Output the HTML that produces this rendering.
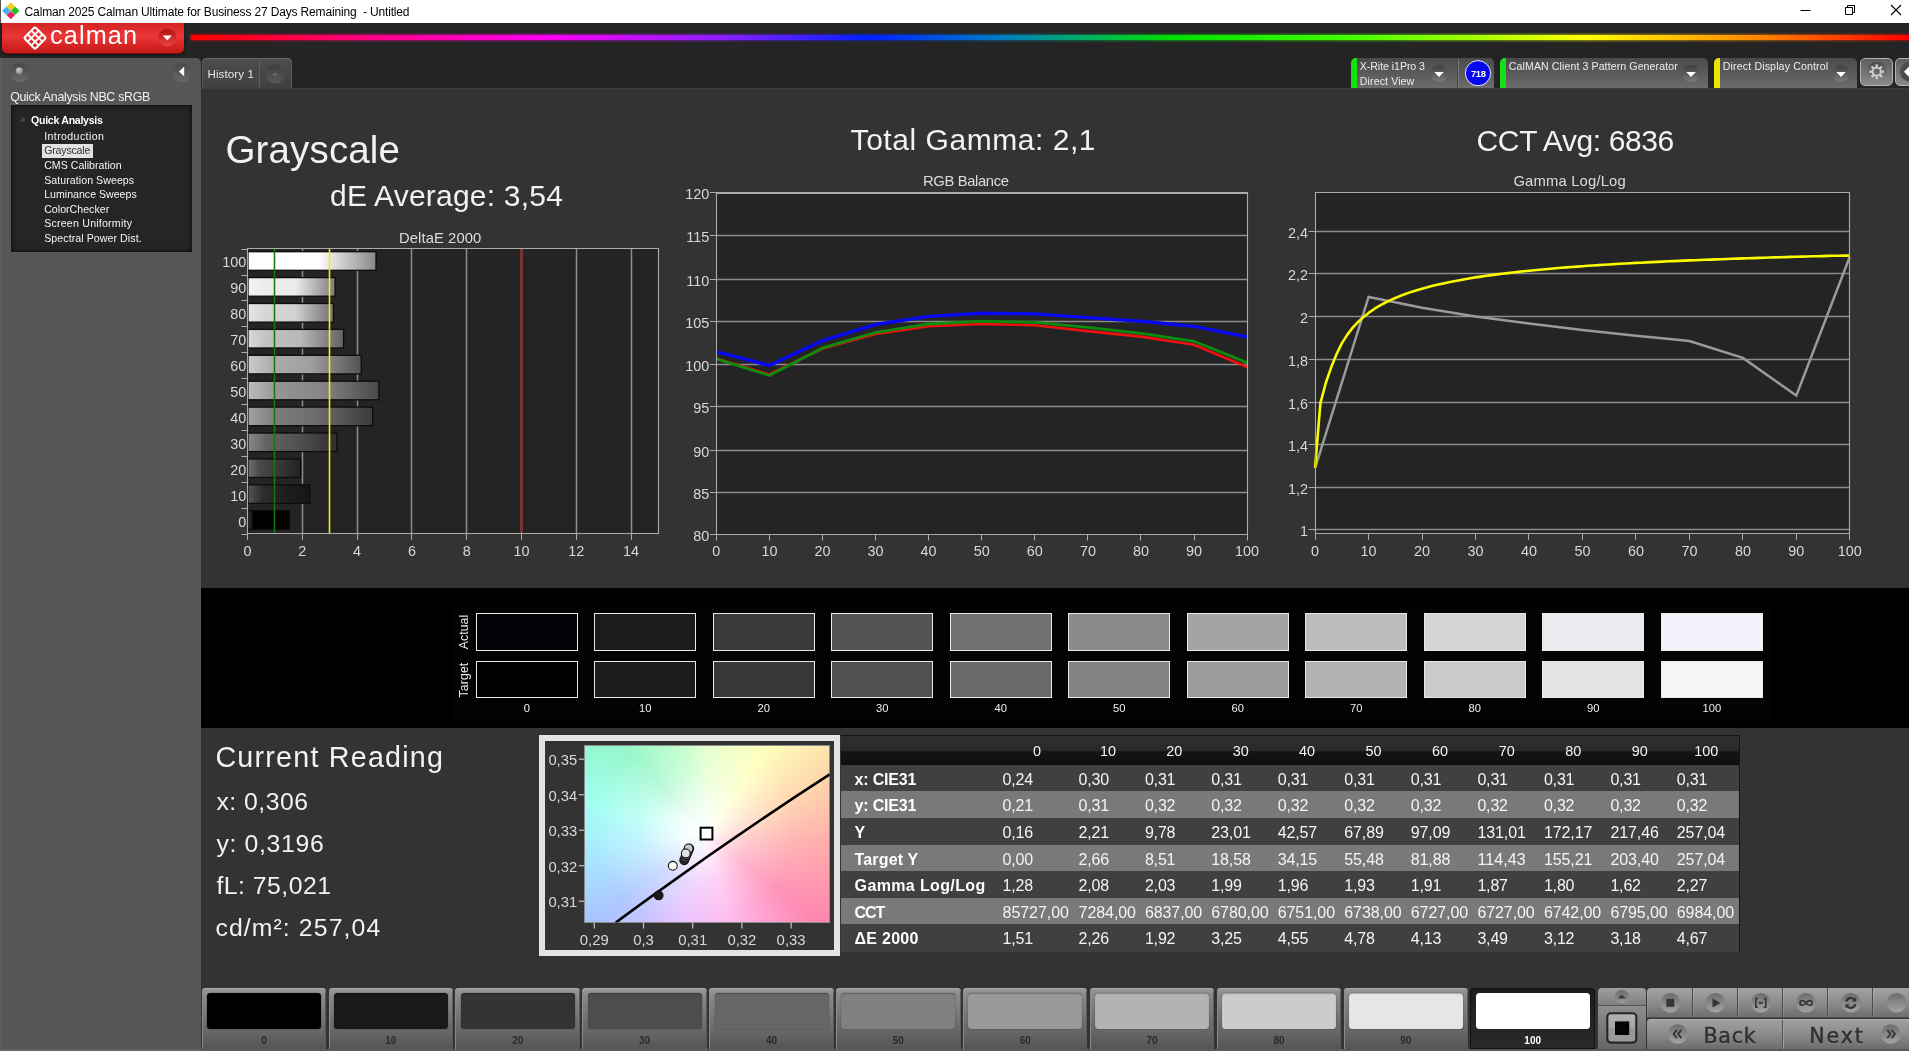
<!DOCTYPE html>
<html><head><meta charset="utf-8"><title>Calman</title>
<style>
html,body{margin:0;padding:0;background:#333;}
body{width:1909px;height:1051px;overflow:hidden;position:relative;font-family:"Liberation Sans",sans-serif;}
#app{position:absolute;left:0;top:0;width:1909px;height:1051px;will-change:transform;}
.t{position:absolute;white-space:nowrap;line-height:1;}
svg{position:absolute;overflow:visible;}
svg text{font-family:"Liberation Sans",sans-serif;}
</style></head><body>
<div id="app">
<div style="position:absolute;left:0px;top:0px;width:1909px;height:23px;background:#fff;"></div>
<svg style="left:0px;top:0px" width="22" height="22" viewBox="0 0 22 22"><path d="M10.8 2.3 L15 6.5 L10.8 10.7 L6.6 6.5Z" fill="#f4cf1e"/><path d="M6.4 6.5 L10.6 10.7 L6.4 14.9 L2.2 10.7Z" fill="#3fb2f2"/><path d="M15.2 6.5 L19.4 10.7 L15.2 14.9 L11 10.7Z" fill="#22c122"/><path d="M10.8 10.9 L15 15.1 L10.8 19.3 L6.6 15.1Z" fill="#e8215e"/></svg>
<div style="position:absolute;left:0px;top:0px;width:1px;height:23px;background:#555;"></div>
<div class="t" style="left:24.60px;top:5.84px;font-size:12px;color:#000;letter-spacing:-0.153px;">Calman 2025 Calman Ultimate for Business 27 Days Remaining&nbsp; - Untitled</div>
<svg style="left:1790px;top:0" width="119" height="23" viewBox="0 0 119 23" fill="none" stroke="#000" stroke-width="1"><path d="M10.5 10.5 H20.5"/><path d="M55.5 7.5 H62.5 V14.5 H55.5Z M57.5 7.5 V5.5 H64.5 V12.5 H62.5"/><path d="M101 5 L111 15 M111 5 L101 15" stroke-width="1.1"/></svg>
<div style="position:absolute;left:0px;top:23px;width:1909px;height:65px;background:#242424;"></div>
<div style="position:absolute;left:2px;top:23px;width:182px;height:29.5px;background:linear-gradient(#d42424 0%,#e93636 45%,#d92626 70%,#c21a1a 100%);border-radius:0 0 5px 5px;box-shadow:0 1px 0 #7a0f0f, 0 2px 3px rgba(0,0,0,.6);"></div>
<svg style="left:23px;top:25.5px" width="24" height="24" viewBox="0 0 24 24"><g transform="rotate(45 12 12)" fill="none" stroke="#fff" stroke-width="2.1"><rect x="4.2" y="4.2" width="15.6" height="15.6" rx="1.5"/><path d="M9.4 4.2 V19.8 M14.6 4.2 V19.8 M4.2 9.4 H19.8 M4.2 14.6 H19.8" stroke-width="1.9"/></g></svg>
<div class="t" style="left:50.00px;top:22.97px;font-size:25.2px;color:#fff;letter-spacing:1.163px;">calman</div>
<svg style="left:157px;top:27px" width="21" height="21" viewBox="0 0 21 21"><defs><linearGradient id="rdg" x1="0" y1="0" x2="0" y2="1"><stop offset="0" stop-color="#b01212"/><stop offset="1" stop-color="#e44"/></linearGradient></defs><circle cx="10.3" cy="10.4" r="9" fill="url(#rdg)"/><path d="M5.8 8.6 H14.8 L10.3 13.4Z" fill="#fff"/></svg>
<div style="position:absolute;left:190px;top:33.8px;width:1722px;height:7.6px;background:linear-gradient(90deg,#ff0000 0%,#ff0018 2.5%,#ff0080 9.9%,#ff00f0 20.4%,#8a20ff 31%,#0020ff 39.4%,#0078c8 46.8%,#00b060 52.1%,#00e000 57.3%,#48ff00 67.9%,#ffff00 81.1%,#ff8000 91.6%,#ff0000 100%);filter:blur(1.3px);opacity:.55;"></div>
<div style="position:absolute;left:191px;top:35.3px;width:1718px;height:4.8px;background:linear-gradient(90deg,#ff0000 0%,#ff0018 2.5%,#ff0080 9.9%,#ff00f0 20.4%,#8a20ff 31%,#0020ff 39.4%,#0078c8 46.8%,#00b060 52.1%,#00e000 57.3%,#48ff00 67.9%,#ffff00 81.1%,#ff8000 91.6%,#ff0000 100%);border-radius:2px 0 0 2px;"></div>
<div style="position:absolute;left:202px;top:58px;width:90px;height:30px;background:linear-gradient(#4d4d4d 0%,#404040 100%);border-radius:5px 5px 0 0;box-shadow:inset 0 1px 0 #6a6a6a, inset 1px 0 0 #5c5c5c, inset -1px 0 0 #5c5c5c;"></div>
<div style="position:absolute;left:259px;top:59px;width:1px;height:29px;background:#5e5e5e;"></div>
<div class="t" style="left:207.50px;top:68.38px;font-size:11.6px;color:#e6e6e6;letter-spacing:0.084px;">History 1</div>
<svg style="left:264px;top:62px" width="24" height="24" viewBox="0 0 24 24"><defs><linearGradient id="pg" x1="0" y1="0" x2="0" y2="1"><stop offset="0" stop-color="#3e3e3e"/><stop offset="1" stop-color="#585858"/></linearGradient></defs><circle cx="11" cy="12" r="9.5" fill="url(#pg)"/><path d="M11 9.6 V15.4 M8.1 12.5 H13.9" stroke="#6c6c6c" stroke-width="1.1"/></svg>
<div style="position:absolute;left:1350.5px;top:58px;width:143px;height:30px;background:linear-gradient(#4b4b4b 0%,#5a5a5a 50%,#6c6c6c 100%);border-radius:5px 5px 0 0;overflow:hidden;"><div style="position:absolute;left:0;top:0;width:6.5px;height:30px;background:#14e014;"></div></div>
<div style="position:absolute;left:1457.5px;top:59px;width:1px;height:29px;background:#777;"></div>
<div style="position:absolute;left:1456.5px;top:59px;width:1px;height:29px;background:#484848;"></div>
<svg style="left:1428.6px;top:63px" width="20" height="20" viewBox="0 0 20 20"><defs><linearGradient id="dg1350.5" x1="0" y1="0" x2="0" y2="1"><stop offset="0" stop-color="#3d3d3d"/><stop offset="1" stop-color="#7a7a7a"/></linearGradient></defs><circle cx="10" cy="10.3" r="8.6" fill="url(#dg1350.5)"/><path d="M5.2 8.9 H14.8 L10 14.100000000000001Z" fill="#fff"/></svg>
<div class="t" style="left:1359.80px;top:61.23px;font-size:10.6px;color:#ececec;letter-spacing:-0.058px;">X-Rite i1Pro 3</div>
<div class="t" style="left:1359.80px;top:75.83px;font-size:10.6px;color:#ececec;letter-spacing:0.107px;">Direct View</div>
<svg style="left:1464px;top:59px" width="28" height="28" viewBox="0 0 28 28"><circle cx="14" cy="14.2" r="12.6" fill="#0606ee" stroke="#e8e8ff" stroke-width="1"/></svg>
<div class="t" style="left:1471.00px;top:68.94px;font-size:9.4px;color:#fff;font-weight:bold;letter-spacing:-0.347px;">718</div>
<div style="position:absolute;left:1499.5px;top:58px;width:208px;height:30px;background:linear-gradient(#4b4b4b 0%,#5a5a5a 50%,#6c6c6c 100%);border-radius:5px 5px 0 0;overflow:hidden;"><div style="position:absolute;left:0;top:0;width:6.5px;height:30px;background:#14e014;"></div></div>
<svg style="left:1681.3px;top:63px" width="20" height="20" viewBox="0 0 20 20"><defs><linearGradient id="dg1499.5" x1="0" y1="0" x2="0" y2="1"><stop offset="0" stop-color="#3d3d3d"/><stop offset="1" stop-color="#7a7a7a"/></linearGradient></defs><circle cx="10" cy="10.3" r="8.6" fill="url(#dg1499.5)"/><path d="M5.2 8.9 H14.8 L10 14.100000000000001Z" fill="#fff"/></svg>
<div class="t" style="left:1508.80px;top:61.23px;font-size:10.6px;color:#ececec;letter-spacing:0.090px;">CalMAN Client 3 Pattern Generator</div>
<div style="position:absolute;left:1713.5px;top:58px;width:143.5px;height:30px;background:linear-gradient(#4b4b4b 0%,#5a5a5a 50%,#6c6c6c 100%);border-radius:5px 5px 0 0;overflow:hidden;"><div style="position:absolute;left:0;top:0;width:6.5px;height:30px;background:#e6e600;"></div></div>
<svg style="left:1830.9px;top:63px" width="20" height="20" viewBox="0 0 20 20"><defs><linearGradient id="dg1713.5" x1="0" y1="0" x2="0" y2="1"><stop offset="0" stop-color="#3d3d3d"/><stop offset="1" stop-color="#7a7a7a"/></linearGradient></defs><circle cx="10" cy="10.3" r="8.6" fill="url(#dg1713.5)"/><path d="M5.2 8.9 H14.8 L10 14.100000000000001Z" fill="#fff"/></svg>
<div class="t" style="left:1722.80px;top:61.23px;font-size:10.6px;color:#ececec;letter-spacing:0.139px;">Direct Display Control</div>
<div style="position:absolute;left:1860px;top:58px;width:33px;height:28px;box-sizing:border-box;border:1px solid #b4b4b4;border-radius:5px;background:linear-gradient(#5e5e5e,#8a8a8a);"></div>
<svg style="left:1866px;top:61px" width="22" height="22" viewBox="0 0 22 22"><defs><linearGradient id="gg" x1="0" y1="0" x2="0" y2="1"><stop offset="0" stop-color="#4a4a4a"/><stop offset="1" stop-color="#8a8a8a"/></linearGradient></defs><circle cx="10.7" cy="10.8" r="10" fill="url(#gg)"/><g transform="translate(10.7 10.7)" stroke="#d2d2d2" fill="none"><circle r="4.1" stroke-width="1.9"/><path d="M0 -4.8 V-7.3" stroke-width="2.3" transform="rotate(0)"/><path d="M0 -4.8 V-7.3" stroke-width="2.3" transform="rotate(45)"/><path d="M0 -4.8 V-7.3" stroke-width="2.3" transform="rotate(90)"/><path d="M0 -4.8 V-7.3" stroke-width="2.3" transform="rotate(135)"/><path d="M0 -4.8 V-7.3" stroke-width="2.3" transform="rotate(180)"/><path d="M0 -4.8 V-7.3" stroke-width="2.3" transform="rotate(225)"/><path d="M0 -4.8 V-7.3" stroke-width="2.3" transform="rotate(270)"/><path d="M0 -4.8 V-7.3" stroke-width="2.3" transform="rotate(315)"/></g></svg>
<div style="position:absolute;left:1895px;top:58px;width:20px;height:28px;box-sizing:border-box;border:1px solid #b4b4b4;border-radius:5px;background:linear-gradient(#5e5e5e,#8a8a8a);"></div>
<svg style="left:1897px;top:61px" width="12" height="22" viewBox="0 0 12 22"><circle cx="13" cy="10.8" r="10" fill="#4c4c4c"/><path d="M12 5.5 V16 L7 10.8Z" fill="#fff"/></svg>
<div style="position:absolute;left:0px;top:58px;width:201px;height:993px;background:#565656;border-radius:0 5px 0 0;"></div>
<div style="position:absolute;left:0px;top:58px;width:1.5px;height:993px;background:#5c5c58;"></div>
<svg style="left:8px;top:61px" width="24" height="24" viewBox="0 0 24 24"><defs><linearGradient id="lb1" x1="0" y1="0" x2="0" y2="1"><stop offset="0" stop-color="#484848"/><stop offset="1" stop-color="#686868"/></linearGradient><radialGradient id="lb2" cx=".4" cy=".35" r=".7"><stop offset="0" stop-color="#cfcfcf"/><stop offset="1" stop-color="#7a7a7a"/></radialGradient></defs><circle cx="11.6" cy="11.6" r="9.6" fill="url(#lb1)"/><circle cx="11.4" cy="9.8" r="3.6" fill="url(#lb2)"/></svg>
<svg style="left:170px;top:61px" width="24" height="24" viewBox="0 0 24 24"><circle cx="11.6" cy="11.6" r="9.6" fill="url(#lb1)"/><path d="M14.2 5.6 V15.4 L9 10.5Z" fill="#fff"/></svg>
<div class="t" style="left:10.20px;top:90.50px;font-size:12.4px;color:#f0f0f0;letter-spacing:-0.298px;">Quick Analysis NBC sRGB</div>
<div style="position:absolute;left:10.5px;top:105px;width:181.5px;height:146.5px;background:#252525;box-shadow:inset 0 0 4px 1px #111;"></div>
<svg style="left:18px;top:115px" width="8" height="8" viewBox="0 0 8 8"><path d="M1.5 6.5 H6.5 V1.5Z" fill="#4a4a4a"/></svg>
<div class="t" style="left:31.00px;top:114.63px;font-size:10.6px;color:#fff;font-weight:bold;letter-spacing:-0.283px;">Quick Analysis</div>
<div style="position:absolute;left:42px;top:143.5px;width:50.5px;height:14px;background:#e2e2e2;"></div>
<div class="t" style="left:44.20px;top:130.73px;font-size:10.6px;color:#f4f4f4;letter-spacing:0.387px;">Introduction</div>
<div class="t" style="left:44.20px;top:145.35px;font-size:10.6px;color:#333;letter-spacing:-0.187px;">Grayscale</div>
<div class="t" style="left:44.20px;top:159.97px;font-size:10.6px;color:#f4f4f4;letter-spacing:0.025px;">CMS Calibration</div>
<div class="t" style="left:44.20px;top:174.59px;font-size:10.6px;color:#f4f4f4;letter-spacing:0.063px;">Saturation Sweeps</div>
<div class="t" style="left:44.20px;top:189.21px;font-size:10.6px;color:#f4f4f4;letter-spacing:0.003px;">Luminance Sweeps</div>
<div class="t" style="left:44.20px;top:203.83px;font-size:10.6px;color:#f4f4f4;letter-spacing:0.020px;">ColorChecker</div>
<div class="t" style="left:44.20px;top:218.45px;font-size:10.6px;color:#f4f4f4;letter-spacing:0.224px;">Screen Uniformity</div>
<div class="t" style="left:44.20px;top:233.07px;font-size:10.6px;color:#f4f4f4;letter-spacing:0.077px;">Spectral Power Dist.</div>
<div style="position:absolute;left:201px;top:88px;width:1708px;height:500px;background:#333;"></div>
<div style="position:absolute;left:201px;top:88px;width:1708px;height:1px;background:#3c3c3c;"></div>
<div class="t" style="left:225.40px;top:130.81px;font-size:38.5px;color:#f2f2f2;letter-spacing:0.163px;">Grayscale</div>
<div class="t" style="left:330.00px;top:180.80px;font-size:30px;color:#f2f2f2;letter-spacing:0.213px;">dE Average: 3,54</div>
<div class="t" style="left:850.60px;top:125.11px;font-size:30px;color:#f2f2f2;letter-spacing:0.541px;">Total Gamma: 2,1</div>
<div class="t" style="left:1476.60px;top:125.61px;font-size:30px;color:#f2f2f2;letter-spacing:-0.389px;">CCT Avg: 6836</div>
<div class="t" style="left:399.00px;top:231.37px;font-size:14.8px;color:#dcdcdc;letter-spacing:0.079px;">DeltaE 2000</div>
<div class="t" style="left:923.00px;top:174.07px;font-size:14.8px;color:#dcdcdc;letter-spacing:-0.372px;">RGB Balance</div>
<div class="t" style="left:1513.40px;top:174.37px;font-size:14.8px;color:#dcdcdc;letter-spacing:0.176px;">Gamma Log/Log</div>
<svg style="left:0;top:0" width="1909" height="600" viewBox="0 0 1909 600">
<rect x="247.5" y="248.4" width="411.0" height="285.5" fill="#242424"/>
<path d="M302.5 248.4 V533.9" stroke="#8c8c8c" stroke-width="1.5"/>
<path d="M357.5 248.4 V533.9" stroke="#8c8c8c" stroke-width="1.5"/>
<path d="M411.5 248.4 V533.9" stroke="#8c8c8c" stroke-width="1.5"/>
<path d="M466.5 248.4 V533.9" stroke="#8c8c8c" stroke-width="1.5"/>
<path d="M521.5 248.4 V533.9" stroke="#8c8c8c" stroke-width="1.5"/>
<path d="M576.5 248.4 V533.9" stroke="#8c8c8c" stroke-width="1.5"/>
<path d="M631.5 248.4 V533.9" stroke="#8c8c8c" stroke-width="1.5"/>
<defs>
<linearGradient id="bg100" x1="0" y1="0" x2="1" y2="0"><stop offset="0" stop-color="#ffffff"/><stop offset="0.22" stop-color="#ffffff"/><stop offset="0.55" stop-color="#ffffff"/><stop offset="1" stop-color="#888888"/></linearGradient>
<linearGradient id="bg90" x1="0" y1="0" x2="1" y2="0"><stop offset="0" stop-color="#f2f2f2"/><stop offset="0.22" stop-color="#eaeaea"/><stop offset="0.55" stop-color="#ebebeb"/><stop offset="1" stop-color="#7b7b7b"/></linearGradient>
<linearGradient id="bg80" x1="0" y1="0" x2="1" y2="0"><stop offset="0" stop-color="#e6e6e6"/><stop offset="0.22" stop-color="#d5d5d5"/><stop offset="0.55" stop-color="#d2d2d2"/><stop offset="1" stop-color="#6e6e6e"/></linearGradient>
<linearGradient id="bg70" x1="0" y1="0" x2="1" y2="0"><stop offset="0" stop-color="#d9d9d9"/><stop offset="0.22" stop-color="#c0c0c0"/><stop offset="0.55" stop-color="#b8b8b8"/><stop offset="1" stop-color="#616161"/></linearGradient>
<linearGradient id="bg60" x1="0" y1="0" x2="1" y2="0"><stop offset="0" stop-color="#cccccc"/><stop offset="0.22" stop-color="#ababab"/><stop offset="0.55" stop-color="#9f9f9f"/><stop offset="1" stop-color="#545454"/></linearGradient>
<linearGradient id="bg50" x1="0" y1="0" x2="1" y2="0"><stop offset="0" stop-color="#bcbcbc"/><stop offset="0.22" stop-color="#959595"/><stop offset="0.55" stop-color="#868686"/><stop offset="1" stop-color="#484848"/></linearGradient>
<linearGradient id="bg40" x1="0" y1="0" x2="1" y2="0"><stop offset="0" stop-color="#a2a2a2"/><stop offset="0.22" stop-color="#7c7c7c"/><stop offset="0.55" stop-color="#6c6c6c"/><stop offset="1" stop-color="#3b3b3b"/></linearGradient>
<linearGradient id="bg30" x1="0" y1="0" x2="1" y2="0"><stop offset="0" stop-color="#888888"/><stop offset="0.22" stop-color="#626262"/><stop offset="0.55" stop-color="#525252"/><stop offset="1" stop-color="#2e2e2e"/></linearGradient>
<linearGradient id="bg20" x1="0" y1="0" x2="1" y2="0"><stop offset="0" stop-color="#6f6f6f"/><stop offset="0.22" stop-color="#494949"/><stop offset="0.55" stop-color="#393939"/><stop offset="1" stop-color="#222222"/></linearGradient>
<linearGradient id="bg10" x1="0" y1="0" x2="1" y2="0"><stop offset="0" stop-color="#565656"/><stop offset="0.22" stop-color="#2f2f2f"/><stop offset="0.55" stop-color="#202020"/><stop offset="1" stop-color="#151515"/></linearGradient>
<linearGradient id="bg0" x1="0" y1="0" x2="1" y2="0"><stop offset="0" stop-color="#3c3c3c"/><stop offset="0.14" stop-color="#000000"/><stop offset="0.55" stop-color="#000000"/><stop offset="1" stop-color="#000000"/></linearGradient>
</defs>
<rect x="248.0" y="251.7" width="128.0" height="18.6" fill="url(#bg100)" stroke="#0c0c0c" stroke-width="1.3"/>
<rect x="248.0" y="277.6" width="87.1" height="18.6" fill="url(#bg90)" stroke="#0c0c0c" stroke-width="1.3"/>
<rect x="248.0" y="303.5" width="85.5" height="18.6" fill="url(#bg80)" stroke="#0c0c0c" stroke-width="1.3"/>
<rect x="248.0" y="329.4" width="95.6" height="18.6" fill="url(#bg70)" stroke="#0c0c0c" stroke-width="1.3"/>
<rect x="248.0" y="355.3" width="113.2" height="18.6" fill="url(#bg60)" stroke="#0c0c0c" stroke-width="1.3"/>
<rect x="248.0" y="381.2" width="131.0" height="18.6" fill="url(#bg50)" stroke="#0c0c0c" stroke-width="1.3"/>
<rect x="248.0" y="407.1" width="124.7" height="18.6" fill="url(#bg40)" stroke="#0c0c0c" stroke-width="1.3"/>
<rect x="248.0" y="433.0" width="89.0" height="18.6" fill="url(#bg30)" stroke="#0c0c0c" stroke-width="1.3"/>
<rect x="248.0" y="458.9" width="52.6" height="18.6" fill="url(#bg20)" stroke="#0c0c0c" stroke-width="1.3"/>
<rect x="248.0" y="484.8" width="61.9" height="18.6" fill="url(#bg10)" stroke="#0c0c0c" stroke-width="1.3"/>
<rect x="248.0" y="510.7" width="41.4" height="18.6" fill="url(#bg0)" stroke="#0c0c0c" stroke-width="1.3"/>
<path d="M274.5 248.4 V533.9" stroke="#0c7c0c" stroke-width="1.5"/>
<path d="M329.5 248.4 V533.9" stroke="#f0f000" stroke-width="1.6"/>
<path d="M521.5 248.4 V533.9" stroke="#c41c1c" stroke-width="1.8"/>
<path d="M247.5 533.5 V248.5 H658.5 V533.5 Z" fill="none" stroke="#ababab" stroke-width="1.1"/>
<path d="M241.5 249.5 H247.5" stroke="#ababab" stroke-width="1"/>
<path d="M241.5 275.5 H247.5" stroke="#ababab" stroke-width="1"/>
<path d="M241.5 300.5 H247.5" stroke="#ababab" stroke-width="1"/>
<path d="M241.5 326.5 H247.5" stroke="#ababab" stroke-width="1"/>
<path d="M241.5 352.5 H247.5" stroke="#ababab" stroke-width="1"/>
<path d="M241.5 378.5 H247.5" stroke="#ababab" stroke-width="1"/>
<path d="M241.5 404.5 H247.5" stroke="#ababab" stroke-width="1"/>
<path d="M241.5 430.5 H247.5" stroke="#ababab" stroke-width="1"/>
<path d="M241.5 456.5 H247.5" stroke="#ababab" stroke-width="1"/>
<path d="M241.5 482.5 H247.5" stroke="#ababab" stroke-width="1"/>
<path d="M241.5 508.5 H247.5" stroke="#ababab" stroke-width="1"/>
<path d="M241.5 534.5 H247.5" stroke="#ababab" stroke-width="1"/>
<text x="246.3" y="267.0" text-anchor="end" font-size="14.4" fill="#d8d8d8">100</text>
<text x="246.3" y="292.9" text-anchor="end" font-size="14.4" fill="#d8d8d8">90</text>
<text x="246.3" y="318.9" text-anchor="end" font-size="14.4" fill="#d8d8d8">80</text>
<text x="246.3" y="344.8" text-anchor="end" font-size="14.4" fill="#d8d8d8">70</text>
<text x="246.3" y="370.8" text-anchor="end" font-size="14.4" fill="#d8d8d8">60</text>
<text x="246.3" y="396.8" text-anchor="end" font-size="14.4" fill="#d8d8d8">50</text>
<text x="246.3" y="422.7" text-anchor="end" font-size="14.4" fill="#d8d8d8">40</text>
<text x="246.3" y="448.7" text-anchor="end" font-size="14.4" fill="#d8d8d8">30</text>
<text x="246.3" y="474.6" text-anchor="end" font-size="14.4" fill="#d8d8d8">20</text>
<text x="246.3" y="500.6" text-anchor="end" font-size="14.4" fill="#d8d8d8">10</text>
<text x="246.3" y="526.5" text-anchor="end" font-size="14.4" fill="#d8d8d8">0</text>
<path d="M247.5 533.9 v6" stroke="#ababab" stroke-width="1"/>
<text x="247.5" y="555.8" text-anchor="middle" font-size="14.4" fill="#d8d8d8">0</text>
<path d="M302.5 533.9 v6" stroke="#ababab" stroke-width="1"/>
<text x="302.3" y="555.8" text-anchor="middle" font-size="14.4" fill="#d8d8d8">2</text>
<path d="M357.5 533.9 v6" stroke="#ababab" stroke-width="1"/>
<text x="357.1" y="555.8" text-anchor="middle" font-size="14.4" fill="#d8d8d8">4</text>
<path d="M411.5 533.9 v6" stroke="#ababab" stroke-width="1"/>
<text x="411.9" y="555.8" text-anchor="middle" font-size="14.4" fill="#d8d8d8">6</text>
<path d="M466.5 533.9 v6" stroke="#ababab" stroke-width="1"/>
<text x="466.7" y="555.8" text-anchor="middle" font-size="14.4" fill="#d8d8d8">8</text>
<path d="M521.5 533.9 v6" stroke="#ababab" stroke-width="1"/>
<text x="521.5" y="555.8" text-anchor="middle" font-size="14.4" fill="#d8d8d8">10</text>
<path d="M576.5 533.9 v6" stroke="#ababab" stroke-width="1"/>
<text x="576.3" y="555.8" text-anchor="middle" font-size="14.4" fill="#d8d8d8">12</text>
<path d="M631.5 533.9 v6" stroke="#ababab" stroke-width="1"/>
<text x="631.1" y="555.8" text-anchor="middle" font-size="14.4" fill="#d8d8d8">14</text>
<rect x="716.3" y="192.5" width="530.8" height="342.0" fill="#242424"/>
<path d="M709.8 192.5 H716.3" stroke="#ababab" stroke-width="1"/>
<text x="709.3" y="199.3" text-anchor="end" font-size="14.4" fill="#d8d8d8">120</text>
<path d="M716.3 235.5 H1247.1" stroke="#8c8c8c" stroke-width="1.5"/>
<path d="M709.8 235.5 H716.3" stroke="#ababab" stroke-width="1"/>
<text x="709.3" y="241.9" text-anchor="end" font-size="14.4" fill="#d8d8d8">115</text>
<path d="M716.3 279.5 H1247.1" stroke="#8c8c8c" stroke-width="1.5"/>
<path d="M709.8 279.5 H716.3" stroke="#ababab" stroke-width="1"/>
<text x="709.3" y="285.9" text-anchor="end" font-size="14.4" fill="#d8d8d8">110</text>
<path d="M716.3 321.5 H1247.1" stroke="#8c8c8c" stroke-width="1.5"/>
<path d="M709.8 321.5 H716.3" stroke="#ababab" stroke-width="1"/>
<text x="709.3" y="327.9" text-anchor="end" font-size="14.4" fill="#d8d8d8">105</text>
<path d="M716.3 364.5 H1247.1" stroke="#8c8c8c" stroke-width="1.5"/>
<path d="M709.8 364.5 H716.3" stroke="#ababab" stroke-width="1"/>
<text x="709.3" y="370.9" text-anchor="end" font-size="14.4" fill="#d8d8d8">100</text>
<path d="M716.3 406.5 H1247.1" stroke="#8c8c8c" stroke-width="1.5"/>
<path d="M709.8 406.5 H716.3" stroke="#ababab" stroke-width="1"/>
<text x="709.3" y="412.9" text-anchor="end" font-size="14.4" fill="#d8d8d8">95</text>
<path d="M716.3 450.5 H1247.1" stroke="#8c8c8c" stroke-width="1.5"/>
<path d="M709.8 450.5 H716.3" stroke="#ababab" stroke-width="1"/>
<text x="709.3" y="456.9" text-anchor="end" font-size="14.4" fill="#d8d8d8">90</text>
<path d="M716.3 492.5 H1247.1" stroke="#8c8c8c" stroke-width="1.5"/>
<path d="M709.8 492.5 H716.3" stroke="#ababab" stroke-width="1"/>
<text x="709.3" y="498.9" text-anchor="end" font-size="14.4" fill="#d8d8d8">85</text>
<path d="M709.8 534.5 H716.3" stroke="#ababab" stroke-width="1"/>
<text x="709.3" y="540.9" text-anchor="end" font-size="14.4" fill="#d8d8d8">80</text>
<polyline points="716.3,358.5 769.4,374.5 822.5,348.5 875.5,334.0 928.6,326.3 981.7,324.0 1034.8,325.2 1087.9,331.1 1140.9,336.6 1194.0,344.7 1247.1,367.0" fill="none" stroke="#f01010" stroke-width="2.6" stroke-linejoin="round"/>
<polyline points="716.3,358.9 769.4,375.5 822.5,347.9 875.5,332.5 928.6,324.0 981.7,321.2 1034.8,322.3 1087.9,327.4 1140.9,333.3 1194.0,341.3 1247.1,362.6" fill="none" stroke="#0c8c0c" stroke-width="2.8" stroke-linejoin="round"/>
<polyline points="716.3,351.6 769.4,365.5 822.5,340.6 875.5,324.5 928.6,316.4 981.7,313.2 1034.8,313.9 1087.9,317.6 1140.9,321.2 1194.0,326.4 1247.1,336.9" fill="none" stroke="#0808f0" stroke-width="3.4" stroke-linejoin="round"/>
<path d="M716.5 534.5 V192.5 H1247.5 V534.5 Z" fill="none" stroke="#ababab" stroke-width="1.1"/>
<path d="M716.3 193.5 H1247.1" stroke="#ababab" stroke-width="1"/>
<path d="M716.5 534.5 v6" stroke="#ababab" stroke-width="1"/>
<text x="716.3" y="555.8" text-anchor="middle" font-size="14.4" fill="#d8d8d8">0</text>
<path d="M769.5 534.5 v6" stroke="#ababab" stroke-width="1"/>
<text x="769.4" y="555.8" text-anchor="middle" font-size="14.4" fill="#d8d8d8">10</text>
<path d="M822.5 534.5 v6" stroke="#ababab" stroke-width="1"/>
<text x="822.5" y="555.8" text-anchor="middle" font-size="14.4" fill="#d8d8d8">20</text>
<path d="M875.5 534.5 v6" stroke="#ababab" stroke-width="1"/>
<text x="875.5" y="555.8" text-anchor="middle" font-size="14.4" fill="#d8d8d8">30</text>
<path d="M928.5 534.5 v6" stroke="#ababab" stroke-width="1"/>
<text x="928.6" y="555.8" text-anchor="middle" font-size="14.4" fill="#d8d8d8">40</text>
<path d="M981.5 534.5 v6" stroke="#ababab" stroke-width="1"/>
<text x="981.7" y="555.8" text-anchor="middle" font-size="14.4" fill="#d8d8d8">50</text>
<path d="M1034.5 534.5 v6" stroke="#ababab" stroke-width="1"/>
<text x="1034.8" y="555.8" text-anchor="middle" font-size="14.4" fill="#d8d8d8">60</text>
<path d="M1087.5 534.5 v6" stroke="#ababab" stroke-width="1"/>
<text x="1087.9" y="555.8" text-anchor="middle" font-size="14.4" fill="#d8d8d8">70</text>
<path d="M1140.5 534.5 v6" stroke="#ababab" stroke-width="1"/>
<text x="1140.9" y="555.8" text-anchor="middle" font-size="14.4" fill="#d8d8d8">80</text>
<path d="M1194.5 534.5 v6" stroke="#ababab" stroke-width="1"/>
<text x="1194.0" y="555.8" text-anchor="middle" font-size="14.4" fill="#d8d8d8">90</text>
<path d="M1247.5 534.5 v6" stroke="#ababab" stroke-width="1"/>
<text x="1247.1" y="555.8" text-anchor="middle" font-size="14.4" fill="#d8d8d8">100</text>
<rect x="1315.1" y="192.4" width="534.7" height="341.5" fill="#242424"/>
<path d="M1315.1 529.5 H1849.8" stroke="#8c8c8c" stroke-width="1.5"/>
<path d="M1308.6 529.5 H1315.1" stroke="#ababab" stroke-width="1"/>
<text x="1308.1" y="535.7" text-anchor="end" font-size="14.4" fill="#d8d8d8">1</text>
<path d="M1315.1 487.5 H1849.8" stroke="#8c8c8c" stroke-width="1.5"/>
<path d="M1308.6 487.5 H1315.1" stroke="#ababab" stroke-width="1"/>
<text x="1308.1" y="493.7" text-anchor="end" font-size="14.4" fill="#d8d8d8">1,2</text>
<path d="M1315.1 444.5 H1849.8" stroke="#8c8c8c" stroke-width="1.5"/>
<path d="M1308.6 444.5 H1315.1" stroke="#ababab" stroke-width="1"/>
<text x="1308.1" y="450.7" text-anchor="end" font-size="14.4" fill="#d8d8d8">1,4</text>
<path d="M1315.1 402.5 H1849.8" stroke="#8c8c8c" stroke-width="1.5"/>
<path d="M1308.6 402.5 H1315.1" stroke="#ababab" stroke-width="1"/>
<text x="1308.1" y="408.7" text-anchor="end" font-size="14.4" fill="#d8d8d8">1,6</text>
<path d="M1315.1 359.5 H1849.8" stroke="#8c8c8c" stroke-width="1.5"/>
<path d="M1308.6 359.5 H1315.1" stroke="#ababab" stroke-width="1"/>
<text x="1308.1" y="365.7" text-anchor="end" font-size="14.4" fill="#d8d8d8">1,8</text>
<path d="M1315.1 316.5 H1849.8" stroke="#8c8c8c" stroke-width="1.5"/>
<path d="M1308.6 316.5 H1315.1" stroke="#ababab" stroke-width="1"/>
<text x="1308.1" y="322.7" text-anchor="end" font-size="14.4" fill="#d8d8d8">2</text>
<path d="M1315.1 273.5 H1849.8" stroke="#8c8c8c" stroke-width="1.5"/>
<path d="M1308.6 273.5 H1315.1" stroke="#ababab" stroke-width="1"/>
<text x="1308.1" y="279.7" text-anchor="end" font-size="14.4" fill="#d8d8d8">2,2</text>
<path d="M1315.1 231.5 H1849.8" stroke="#8c8c8c" stroke-width="1.5"/>
<path d="M1308.6 231.5 H1315.1" stroke="#ababab" stroke-width="1"/>
<text x="1308.1" y="237.7" text-anchor="end" font-size="14.4" fill="#d8d8d8">2,4</text>
<polyline points="1315.1,468.2 1368.6,297.0 1422.0,307.7 1475.5,316.4 1529.0,323.4 1582.4,330.0 1635.9,335.7 1689.4,341.1 1742.9,357.9 1796.3,395.6 1849.8,256.8" fill="none" stroke="#9a9a9a" stroke-width="2.5" stroke-linejoin="miter"/>
<polyline points="1315.1,467.7 1320.4,403.2 1325.8,383.0 1331.1,367.6 1336.5,354.3 1341.8,343.4 1347.2,334.9 1352.5,327.9 1357.9,322.1 1363.2,317.2 1368.6,312.9 1373.9,309.2 1379.3,305.9 1384.6,303.0 1390.0,300.4 1395.3,298.0 1400.7,295.8 1406.0,293.8 1411.3,291.9 1416.7,290.3 1422.0,288.7 1427.4,287.2 1432.7,285.8 1438.1,284.6 1443.4,283.4 1448.8,282.2 1454.1,281.2 1459.5,280.2 1464.8,279.2 1470.2,278.3 1475.5,277.4 1480.9,276.6 1486.2,275.8 1491.6,275.1 1496.9,274.4 1502.2,273.7 1507.6,273.1 1512.9,272.5 1518.3,271.9 1523.6,271.3 1529.0,270.7 1534.3,270.2 1539.7,269.7 1545.0,269.2 1550.4,268.7 1555.7,268.3 1561.1,267.8 1566.4,267.4 1571.8,267.0 1577.1,266.6 1582.4,266.2 1587.8,265.8 1593.1,265.5 1598.5,265.1 1603.8,264.8 1609.2,264.5 1614.5,264.1 1619.9,263.8 1625.2,263.5 1630.6,263.2 1635.9,262.9 1641.3,262.7 1646.6,262.4 1652.0,262.1 1657.3,261.9 1662.7,261.6 1668.0,261.3 1673.3,261.1 1678.7,260.9 1684.0,260.6 1689.4,260.4 1694.7,260.2 1700.1,260.0 1705.4,259.8 1710.8,259.6 1716.1,259.4 1721.5,259.2 1726.8,259.0 1732.2,258.8 1737.5,258.6 1742.9,258.4 1748.2,258.2 1753.6,258.1 1758.9,257.9 1764.2,257.7 1769.6,257.5 1774.9,257.4 1780.3,257.2 1785.6,257.1 1791.0,256.9 1796.3,256.8 1801.7,256.6 1807.0,256.5 1812.4,256.3 1817.7,256.2 1823.1,256.1 1828.4,255.9 1833.8,255.8 1839.1,255.7 1844.5,255.5 1849.8,255.6" fill="none" stroke="#fcfc00" stroke-width="2.6" stroke-linejoin="round"/>
<path d="M1315.5 533.5 V192.5 H1849.5 V533.5 Z" fill="none" stroke="#ababab" stroke-width="1.1"/>
<path d="M1315.5 533.9 v6" stroke="#ababab" stroke-width="1"/>
<text x="1315.1" y="555.8" text-anchor="middle" font-size="14.4" fill="#d8d8d8">0</text>
<path d="M1368.5 533.9 v6" stroke="#ababab" stroke-width="1"/>
<text x="1368.6" y="555.8" text-anchor="middle" font-size="14.4" fill="#d8d8d8">10</text>
<path d="M1422.5 533.9 v6" stroke="#ababab" stroke-width="1"/>
<text x="1422.0" y="555.8" text-anchor="middle" font-size="14.4" fill="#d8d8d8">20</text>
<path d="M1475.5 533.9 v6" stroke="#ababab" stroke-width="1"/>
<text x="1475.5" y="555.8" text-anchor="middle" font-size="14.4" fill="#d8d8d8">30</text>
<path d="M1528.5 533.9 v6" stroke="#ababab" stroke-width="1"/>
<text x="1529.0" y="555.8" text-anchor="middle" font-size="14.4" fill="#d8d8d8">40</text>
<path d="M1582.5 533.9 v6" stroke="#ababab" stroke-width="1"/>
<text x="1582.4" y="555.8" text-anchor="middle" font-size="14.4" fill="#d8d8d8">50</text>
<path d="M1635.5 533.9 v6" stroke="#ababab" stroke-width="1"/>
<text x="1635.9" y="555.8" text-anchor="middle" font-size="14.4" fill="#d8d8d8">60</text>
<path d="M1689.5 533.9 v6" stroke="#ababab" stroke-width="1"/>
<text x="1689.4" y="555.8" text-anchor="middle" font-size="14.4" fill="#d8d8d8">70</text>
<path d="M1742.5 533.9 v6" stroke="#ababab" stroke-width="1"/>
<text x="1742.9" y="555.8" text-anchor="middle" font-size="14.4" fill="#d8d8d8">80</text>
<path d="M1796.5 533.9 v6" stroke="#ababab" stroke-width="1"/>
<text x="1796.3" y="555.8" text-anchor="middle" font-size="14.4" fill="#d8d8d8">90</text>
<path d="M1849.5 533.9 v6" stroke="#ababab" stroke-width="1"/>
<text x="1849.8" y="555.8" text-anchor="middle" font-size="14.4" fill="#d8d8d8">100</text>
</svg>
<div style="position:absolute;left:201px;top:587.5px;width:1708px;height:140.5px;background:#000;"></div>
<div style="position:absolute;left:454px;top:607px;width:1318px;height:113px;background:#030303;"></div>
<div style="position:absolute;left:475.6px;top:613px;width:102.3px;height:38px;box-sizing:border-box;border:1.9px solid #e9e9e9;background:#040408;"></div>
<div style="position:absolute;left:475.6px;top:660.5px;width:102.3px;height:37.7px;box-sizing:border-box;border:1.9px solid #e9e9e9;background:#000000;"></div>
<div class="t" style="left:523.69px;top:702.52px;font-size:11.2px;color:#f0f0f0;">0</div>
<div style="position:absolute;left:594.1px;top:613px;width:102.3px;height:38px;box-sizing:border-box;border:1.9px solid #e9e9e9;background:#1b1b1d;"></div>
<div style="position:absolute;left:594.1px;top:660.5px;width:102.3px;height:37.7px;box-sizing:border-box;border:1.9px solid #e9e9e9;background:#1c1c1c;"></div>
<div class="t" style="left:639.08px;top:702.52px;font-size:11.2px;color:#f0f0f0;">10</div>
<div style="position:absolute;left:712.6px;top:613px;width:102.3px;height:38px;box-sizing:border-box;border:1.9px solid #e9e9e9;background:#39393b;"></div>
<div style="position:absolute;left:712.6px;top:660.5px;width:102.3px;height:37.7px;box-sizing:border-box;border:1.9px solid #e9e9e9;background:#383838;"></div>
<div class="t" style="left:757.58px;top:702.52px;font-size:11.2px;color:#f0f0f0;">20</div>
<div style="position:absolute;left:831.1px;top:613px;width:102.3px;height:38px;box-sizing:border-box;border:1.9px solid #e9e9e9;background:#545457;"></div>
<div style="position:absolute;left:831.1px;top:660.5px;width:102.3px;height:37.7px;box-sizing:border-box;border:1.9px solid #e9e9e9;background:#505050;"></div>
<div class="t" style="left:876.08px;top:702.52px;font-size:11.2px;color:#f0f0f0;">30</div>
<div style="position:absolute;left:949.6px;top:613px;width:102.3px;height:38px;box-sizing:border-box;border:1.9px solid #e9e9e9;background:#707073;"></div>
<div style="position:absolute;left:949.6px;top:660.5px;width:102.3px;height:37.7px;box-sizing:border-box;border:1.9px solid #e9e9e9;background:#6a6a6a;"></div>
<div class="t" style="left:994.58px;top:702.52px;font-size:11.2px;color:#f0f0f0;">40</div>
<div style="position:absolute;left:1068.1px;top:613px;width:102.3px;height:38px;box-sizing:border-box;border:1.9px solid #e9e9e9;background:#8b8b8e;"></div>
<div style="position:absolute;left:1068.1px;top:660.5px;width:102.3px;height:37.7px;box-sizing:border-box;border:1.9px solid #e9e9e9;background:#828282;"></div>
<div class="t" style="left:1113.08px;top:702.52px;font-size:11.2px;color:#f0f0f0;">50</div>
<div style="position:absolute;left:1186.6px;top:613px;width:102.3px;height:38px;box-sizing:border-box;border:1.9px solid #e9e9e9;background:#a4a4a7;"></div>
<div style="position:absolute;left:1186.6px;top:660.5px;width:102.3px;height:37.7px;box-sizing:border-box;border:1.9px solid #e9e9e9;background:#9b9b9b;"></div>
<div class="t" style="left:1231.58px;top:702.52px;font-size:11.2px;color:#f0f0f0;">60</div>
<div style="position:absolute;left:1305.1px;top:613px;width:102.3px;height:38px;box-sizing:border-box;border:1.9px solid #e9e9e9;background:#bdbdc0;"></div>
<div style="position:absolute;left:1305.1px;top:660.5px;width:102.3px;height:37.7px;box-sizing:border-box;border:1.9px solid #e9e9e9;background:#b2b2b2;"></div>
<div class="t" style="left:1350.08px;top:702.52px;font-size:11.2px;color:#f0f0f0;">70</div>
<div style="position:absolute;left:1423.6px;top:613px;width:102.3px;height:38px;box-sizing:border-box;border:1.9px solid #e9e9e9;background:#d5d5d8;"></div>
<div style="position:absolute;left:1423.6px;top:660.5px;width:102.3px;height:37.7px;box-sizing:border-box;border:1.9px solid #e9e9e9;background:#cacaca;"></div>
<div class="t" style="left:1468.58px;top:702.52px;font-size:11.2px;color:#f0f0f0;">80</div>
<div style="position:absolute;left:1542.1px;top:613px;width:102.3px;height:38px;box-sizing:border-box;border:1.9px solid #e9e9e9;background:#eaeaef;"></div>
<div style="position:absolute;left:1542.1px;top:660.5px;width:102.3px;height:37.7px;box-sizing:border-box;border:1.9px solid #e9e9e9;background:#e4e4e4;"></div>
<div class="t" style="left:1587.08px;top:702.52px;font-size:11.2px;color:#f0f0f0;">90</div>
<div style="position:absolute;left:1660.6px;top:613px;width:102.3px;height:38px;box-sizing:border-box;border:1.9px solid #e9e9e9;background:#f3f3fc;"></div>
<div style="position:absolute;left:1660.6px;top:660.5px;width:102.3px;height:37.7px;box-sizing:border-box;border:1.9px solid #e9e9e9;background:#f5f5f5;"></div>
<div class="t" style="left:1702.47px;top:702.52px;font-size:11.2px;color:#f0f0f0;">100</div>
<div class="t" style="left:463.8px;top:632px;font-size:12.2px;color:#f0f0f0;transform:translate(-50%,-50%) rotate(-90deg);letter-spacing:0.1px;">Actual</div>
<div class="t" style="left:463.8px;top:679.5px;font-size:12.2px;color:#f0f0f0;transform:translate(-50%,-50%) rotate(-90deg);letter-spacing:0.15px;">Target</div>
<div style="position:absolute;left:201px;top:728px;width:1708px;height:260px;background:#333;"></div>
<div class="t" style="left:215.40px;top:742.91px;font-size:28.7px;color:#f2f2f2;letter-spacing:1.219px;">Current Reading</div>
<div class="t" style="left:216.40px;top:790.31px;font-size:24.8px;color:#f2f2f2;letter-spacing:0.494px;">x: 0,306</div>
<div class="t" style="left:216.40px;top:832.31px;font-size:24.8px;color:#f2f2f2;letter-spacing:0.659px;">y: 0,3196</div>
<div class="t" style="left:216.40px;top:874.11px;font-size:24.8px;color:#f2f2f2;letter-spacing:0.476px;">fL: 75,021</div>
<div class="t" style="left:215.40px;top:916.41px;font-size:24.8px;color:#f2f2f2;letter-spacing:1.098px;">cd/m²: 257,04</div>
<div style="position:absolute;left:538.7px;top:734.9px;width:301.5px;height:221.1px;box-sizing:border-box;border:6.6px solid #e4e4e4;background:#333;"></div>
<div style="position:absolute;left:584.4px;top:745.1px;width:245.30000000000007px;height:177.5px;box-sizing:border-box;border:1px solid #8c8c8c;background:radial-gradient(circle at 110px 83px, rgba(255,255,255,1) 0px, rgba(255,255,255,.82) 20px, rgba(255,255,255,.42) 55px, rgba(255,255,255,.12) 100px, rgba(255,255,255,0) 150px),conic-gradient(from 0deg at 122px 89px, #dcffc0 0deg, #ffffb4 35deg, #ffd8a8 62deg, #ffa8a8 95deg, #ff86b0 128deg, #ffb0ec 165deg, #e8b8ff 195deg, #a4c0ff 232deg, #9ce8ff 262deg, #98fff0 285deg, #88f5c0 318deg, #b4ffc0 345deg, #dcffc0 360deg);"></div>
<svg style="left:0;top:0" width="1909" height="1051" viewBox="0 0 1909 1051">
<clipPath id="cclip"><rect x="584.4" y="745.1" width="245.30000000000007" height="177.5"/></clipPath>
<path d="M615.7 922.6 Q 724 842.5 829.7 774.4" fill="none" stroke="#000" stroke-width="2.6" clip-path="url(#cclip)"/>
<path d="M578.9 901.2 H584.4" stroke="#c4c4c4" stroke-width="1.2"/>
<text x="577.1999999999999" y="907.2" text-anchor="end" font-size="14.8" fill="#d8d8d8">0,31</text>
<path d="M578.9 865.7 H584.4" stroke="#c4c4c4" stroke-width="1.2"/>
<text x="577.1999999999999" y="871.7" text-anchor="end" font-size="14.8" fill="#d8d8d8">0,32</text>
<path d="M578.9 830.2 H584.4" stroke="#c4c4c4" stroke-width="1.2"/>
<text x="577.1999999999999" y="836.2" text-anchor="end" font-size="14.8" fill="#d8d8d8">0,33</text>
<path d="M578.9 794.7 H584.4" stroke="#c4c4c4" stroke-width="1.2"/>
<text x="577.1999999999999" y="800.7" text-anchor="end" font-size="14.8" fill="#d8d8d8">0,34</text>
<path d="M578.9 759.2 H584.4" stroke="#c4c4c4" stroke-width="1.2"/>
<text x="577.1999999999999" y="765.2" text-anchor="end" font-size="14.8" fill="#d8d8d8">0,35</text>
<path d="M594.3 922.6 v6" stroke="#c4c4c4" stroke-width="1.2"/>
<text x="594.3" y="945" text-anchor="middle" font-size="14.9" fill="#d8d8d8">0,29</text>
<path d="M643.5 922.6 v6" stroke="#c4c4c4" stroke-width="1.2"/>
<text x="643.5" y="945" text-anchor="middle" font-size="14.9" fill="#d8d8d8">0,3</text>
<path d="M692.7 922.6 v6" stroke="#c4c4c4" stroke-width="1.2"/>
<text x="692.7" y="945" text-anchor="middle" font-size="14.9" fill="#d8d8d8">0,31</text>
<path d="M741.9 922.6 v6" stroke="#c4c4c4" stroke-width="1.2"/>
<text x="741.9" y="945" text-anchor="middle" font-size="14.9" fill="#d8d8d8">0,32</text>
<path d="M791.1 922.6 v6" stroke="#c4c4c4" stroke-width="1.2"/>
<text x="791.1" y="945" text-anchor="middle" font-size="14.9" fill="#d8d8d8">0,33</text>
<rect x="700.6" y="827.7" width="11.8" height="11.8" fill="#fff" stroke="#000" stroke-width="2"/>
<circle cx="658.6" cy="895.4" r="4.4" fill="#1a1a1a" stroke="#111" stroke-width="1.1"/>
<circle cx="684.2" cy="860.2" r="4.4" fill="#2a2a2a" stroke="#111" stroke-width="1.1"/>
<circle cx="685.4" cy="857.6" r="4.4" fill="#505050" stroke="#111" stroke-width="1.1"/>
<circle cx="686.4" cy="855.2" r="4.4" fill="#6a6a6a" stroke="#111" stroke-width="1.1"/>
<circle cx="687.4" cy="852.8" r="4.4" fill="#858585" stroke="#111" stroke-width="1.1"/>
<circle cx="688.4" cy="850.6" r="4.4" fill="#9e9e9e" stroke="#111" stroke-width="1.1"/>
<circle cx="689.2" cy="848.6" r="4.4" fill="#b4b4b4" stroke="#111" stroke-width="1.1"/>
<circle cx="688.6" cy="848.4" r="4.4" fill="#c8c8c8" stroke="#111" stroke-width="1.1"/>
<circle cx="685.8" cy="853.4" r="4.4" fill="#e2e2e2" stroke="#111" stroke-width="1.1"/>
<circle cx="672.8" cy="865.8" r="4.4" fill="#ffffff" stroke="#111" stroke-width="1.1"/>
</svg>
<div style="position:absolute;left:840.8px;top:735px;width:899.7px;height:216.5px;background:#141414;"></div>
<div style="position:absolute;left:840.8px;top:736px;width:898.7px;height:29px;background:linear-gradient(#2e2e2e 0%,#292929 50%,#141414 54%,#0f0f0f 100%);"></div>
<div class="t" style="left:1033.00px;top:743.81px;font-size:14.4px;color:#f4f4f4;">0</div>
<div class="t" style="left:1100.00px;top:743.81px;font-size:14.4px;color:#f4f4f4;">10</div>
<div class="t" style="left:1166.30px;top:743.81px;font-size:14.4px;color:#f4f4f4;">20</div>
<div class="t" style="left:1232.70px;top:743.81px;font-size:14.4px;color:#f4f4f4;">30</div>
<div class="t" style="left:1299.10px;top:743.81px;font-size:14.4px;color:#f4f4f4;">40</div>
<div class="t" style="left:1365.60px;top:743.81px;font-size:14.4px;color:#f4f4f4;">50</div>
<div class="t" style="left:1432.10px;top:743.81px;font-size:14.4px;color:#f4f4f4;">60</div>
<div class="t" style="left:1498.70px;top:743.81px;font-size:14.4px;color:#f4f4f4;">70</div>
<div class="t" style="left:1565.20px;top:743.81px;font-size:14.4px;color:#f4f4f4;">80</div>
<div class="t" style="left:1631.70px;top:743.81px;font-size:14.4px;color:#f4f4f4;">90</div>
<div class="t" style="left:1694.19px;top:743.81px;font-size:14.4px;color:#f4f4f4;">100</div>
<div style="position:absolute;left:840.8px;top:765px;width:898.7px;height:27px;background:#404040;"></div>
<div class="t" style="left:854.60px;top:771.71px;font-size:16px;color:#fff;font-weight:bold;letter-spacing:-0.205px;">x: CIE31</div>
<div class="t" style="left:1002.60px;top:771.71px;font-size:16px;color:#f4f4f4;letter-spacing:-0.174px;">0,24</div>
<div class="t" style="left:1078.60px;top:771.71px;font-size:16px;color:#f4f4f4;letter-spacing:-0.174px;">0,30</div>
<div class="t" style="left:1144.90px;top:771.71px;font-size:16px;color:#f4f4f4;letter-spacing:-0.174px;">0,31</div>
<div class="t" style="left:1211.30px;top:771.71px;font-size:16px;color:#f4f4f4;letter-spacing:-0.174px;">0,31</div>
<div class="t" style="left:1277.70px;top:771.71px;font-size:16px;color:#f4f4f4;letter-spacing:-0.174px;">0,31</div>
<div class="t" style="left:1344.30px;top:771.71px;font-size:16px;color:#f4f4f4;letter-spacing:-0.174px;">0,31</div>
<div class="t" style="left:1410.80px;top:771.71px;font-size:16px;color:#f4f4f4;letter-spacing:-0.174px;">0,31</div>
<div class="t" style="left:1477.40px;top:771.71px;font-size:16px;color:#f4f4f4;letter-spacing:-0.174px;">0,31</div>
<div class="t" style="left:1543.90px;top:771.71px;font-size:16px;color:#f4f4f4;letter-spacing:-0.174px;">0,31</div>
<div class="t" style="left:1610.40px;top:771.71px;font-size:16px;color:#f4f4f4;letter-spacing:-0.174px;">0,31</div>
<div class="t" style="left:1676.80px;top:771.71px;font-size:16px;color:#f4f4f4;letter-spacing:-0.174px;">0,31</div>
<div style="position:absolute;left:840.8px;top:791px;width:898.7px;height:27px;background:#797979;"></div>
<div class="t" style="left:854.60px;top:798.21px;font-size:16px;color:#fff;font-weight:bold;letter-spacing:-0.205px;">y: CIE31</div>
<div class="t" style="left:1002.60px;top:798.21px;font-size:16px;color:#f4f4f4;letter-spacing:-0.174px;">0,21</div>
<div class="t" style="left:1078.60px;top:798.21px;font-size:16px;color:#f4f4f4;letter-spacing:-0.174px;">0,31</div>
<div class="t" style="left:1144.90px;top:798.21px;font-size:16px;color:#f4f4f4;letter-spacing:-0.174px;">0,32</div>
<div class="t" style="left:1211.30px;top:798.21px;font-size:16px;color:#f4f4f4;letter-spacing:-0.174px;">0,32</div>
<div class="t" style="left:1277.70px;top:798.21px;font-size:16px;color:#f4f4f4;letter-spacing:-0.174px;">0,32</div>
<div class="t" style="left:1344.30px;top:798.21px;font-size:16px;color:#f4f4f4;letter-spacing:-0.174px;">0,32</div>
<div class="t" style="left:1410.80px;top:798.21px;font-size:16px;color:#f4f4f4;letter-spacing:-0.174px;">0,32</div>
<div class="t" style="left:1477.40px;top:798.21px;font-size:16px;color:#f4f4f4;letter-spacing:-0.174px;">0,32</div>
<div class="t" style="left:1543.90px;top:798.21px;font-size:16px;color:#f4f4f4;letter-spacing:-0.174px;">0,32</div>
<div class="t" style="left:1610.40px;top:798.21px;font-size:16px;color:#f4f4f4;letter-spacing:-0.174px;">0,32</div>
<div class="t" style="left:1676.80px;top:798.21px;font-size:16px;color:#f4f4f4;letter-spacing:-0.174px;">0,32</div>
<div style="position:absolute;left:840.8px;top:818px;width:898.7px;height:27px;background:#404040;"></div>
<div class="t" style="left:854.60px;top:824.96px;font-size:16px;color:#fff;font-weight:bold;">Y</div>
<div class="t" style="left:1002.60px;top:824.96px;font-size:16px;color:#f4f4f4;letter-spacing:-0.174px;">0,16</div>
<div class="t" style="left:1078.60px;top:824.96px;font-size:16px;color:#f4f4f4;letter-spacing:-0.174px;">2,21</div>
<div class="t" style="left:1144.90px;top:824.96px;font-size:16px;color:#f4f4f4;letter-spacing:-0.174px;">9,78</div>
<div class="t" style="left:1211.30px;top:824.96px;font-size:16px;color:#f4f4f4;letter-spacing:-0.129px;">23,01</div>
<div class="t" style="left:1277.70px;top:824.96px;font-size:16px;color:#f4f4f4;letter-spacing:-0.129px;">42,57</div>
<div class="t" style="left:1344.30px;top:824.96px;font-size:16px;color:#f4f4f4;letter-spacing:-0.129px;">67,89</div>
<div class="t" style="left:1410.80px;top:824.96px;font-size:16px;color:#f4f4f4;letter-spacing:-0.129px;">97,09</div>
<div class="t" style="left:1477.40px;top:824.96px;font-size:16px;color:#f4f4f4;letter-spacing:-0.100px;">131,01</div>
<div class="t" style="left:1543.90px;top:824.96px;font-size:16px;color:#f4f4f4;letter-spacing:-0.100px;">172,17</div>
<div class="t" style="left:1610.40px;top:824.96px;font-size:16px;color:#f4f4f4;letter-spacing:-0.100px;">217,46</div>
<div class="t" style="left:1676.80px;top:824.96px;font-size:16px;color:#f4f4f4;letter-spacing:-0.100px;">257,04</div>
<div style="position:absolute;left:840.8px;top:845px;width:898.7px;height:27px;background:#797979;"></div>
<div class="t" style="left:854.60px;top:851.71px;font-size:16px;color:#fff;font-weight:bold;letter-spacing:0.146px;">Target Y</div>
<div class="t" style="left:1002.60px;top:851.71px;font-size:16px;color:#f4f4f4;letter-spacing:-0.174px;">0,00</div>
<div class="t" style="left:1078.60px;top:851.71px;font-size:16px;color:#f4f4f4;letter-spacing:-0.174px;">2,66</div>
<div class="t" style="left:1144.90px;top:851.71px;font-size:16px;color:#f4f4f4;letter-spacing:-0.174px;">8,51</div>
<div class="t" style="left:1211.30px;top:851.71px;font-size:16px;color:#f4f4f4;letter-spacing:-0.129px;">18,58</div>
<div class="t" style="left:1277.70px;top:851.71px;font-size:16px;color:#f4f4f4;letter-spacing:-0.129px;">34,15</div>
<div class="t" style="left:1344.30px;top:851.71px;font-size:16px;color:#f4f4f4;letter-spacing:-0.129px;">55,48</div>
<div class="t" style="left:1410.80px;top:851.71px;font-size:16px;color:#f4f4f4;letter-spacing:-0.129px;">81,88</div>
<div class="t" style="left:1477.40px;top:851.71px;font-size:16px;color:#f4f4f4;letter-spacing:0.098px;">114,43</div>
<div class="t" style="left:1543.90px;top:851.71px;font-size:16px;color:#f4f4f4;letter-spacing:-0.100px;">155,21</div>
<div class="t" style="left:1610.40px;top:851.71px;font-size:16px;color:#f4f4f4;letter-spacing:-0.100px;">203,40</div>
<div class="t" style="left:1676.80px;top:851.71px;font-size:16px;color:#f4f4f4;letter-spacing:-0.100px;">257,04</div>
<div style="position:absolute;left:840.8px;top:871px;width:898.7px;height:27px;background:#404040;"></div>
<div class="t" style="left:854.60px;top:878.21px;font-size:16px;color:#fff;font-weight:bold;letter-spacing:0.367px;">Gamma Log/Log</div>
<div class="t" style="left:1002.60px;top:878.21px;font-size:16px;color:#f4f4f4;letter-spacing:-0.174px;">1,28</div>
<div class="t" style="left:1078.60px;top:878.21px;font-size:16px;color:#f4f4f4;letter-spacing:-0.174px;">2,08</div>
<div class="t" style="left:1144.90px;top:878.21px;font-size:16px;color:#f4f4f4;letter-spacing:-0.174px;">2,03</div>
<div class="t" style="left:1211.30px;top:878.21px;font-size:16px;color:#f4f4f4;letter-spacing:-0.174px;">1,99</div>
<div class="t" style="left:1277.70px;top:878.21px;font-size:16px;color:#f4f4f4;letter-spacing:-0.174px;">1,96</div>
<div class="t" style="left:1344.30px;top:878.21px;font-size:16px;color:#f4f4f4;letter-spacing:-0.174px;">1,93</div>
<div class="t" style="left:1410.80px;top:878.21px;font-size:16px;color:#f4f4f4;letter-spacing:-0.174px;">1,91</div>
<div class="t" style="left:1477.40px;top:878.21px;font-size:16px;color:#f4f4f4;letter-spacing:-0.174px;">1,87</div>
<div class="t" style="left:1543.90px;top:878.21px;font-size:16px;color:#f4f4f4;letter-spacing:-0.174px;">1,80</div>
<div class="t" style="left:1610.40px;top:878.21px;font-size:16px;color:#f4f4f4;letter-spacing:-0.174px;">1,62</div>
<div class="t" style="left:1676.80px;top:878.21px;font-size:16px;color:#f4f4f4;letter-spacing:-0.174px;">2,27</div>
<div style="position:absolute;left:840.8px;top:898px;width:898.7px;height:27px;background:#797979;"></div>
<div class="t" style="left:854.60px;top:904.71px;font-size:16px;color:#fff;font-weight:bold;letter-spacing:-1.128px;">CCT</div>
<div class="t" style="left:1002.60px;top:904.71px;font-size:16px;color:#f4f4f4;letter-spacing:-0.063px;">85727,00</div>
<div class="t" style="left:1078.60px;top:904.71px;font-size:16px;color:#f4f4f4;letter-spacing:-0.078px;">7284,00</div>
<div class="t" style="left:1144.90px;top:904.71px;font-size:16px;color:#f4f4f4;letter-spacing:-0.078px;">6837,00</div>
<div class="t" style="left:1211.30px;top:904.71px;font-size:16px;color:#f4f4f4;letter-spacing:-0.078px;">6780,00</div>
<div class="t" style="left:1277.70px;top:904.71px;font-size:16px;color:#f4f4f4;letter-spacing:-0.078px;">6751,00</div>
<div class="t" style="left:1344.30px;top:904.71px;font-size:16px;color:#f4f4f4;letter-spacing:-0.078px;">6738,00</div>
<div class="t" style="left:1410.80px;top:904.71px;font-size:16px;color:#f4f4f4;letter-spacing:-0.078px;">6727,00</div>
<div class="t" style="left:1477.40px;top:904.71px;font-size:16px;color:#f4f4f4;letter-spacing:-0.078px;">6727,00</div>
<div class="t" style="left:1543.90px;top:904.71px;font-size:16px;color:#f4f4f4;letter-spacing:-0.078px;">6742,00</div>
<div class="t" style="left:1610.40px;top:904.71px;font-size:16px;color:#f4f4f4;letter-spacing:-0.078px;">6795,00</div>
<div class="t" style="left:1676.80px;top:904.71px;font-size:16px;color:#f4f4f4;letter-spacing:-0.078px;">6984,00</div>
<div style="position:absolute;left:840.8px;top:924px;width:898.7px;height:28px;background:#404040;"></div>
<div class="t" style="left:854.60px;top:931.46px;font-size:16px;color:#fff;font-weight:bold;letter-spacing:0.256px;">ΔE 2000</div>
<div class="t" style="left:1002.60px;top:931.46px;font-size:16px;color:#f4f4f4;letter-spacing:-0.174px;">1,51</div>
<div class="t" style="left:1078.60px;top:931.46px;font-size:16px;color:#f4f4f4;letter-spacing:-0.174px;">2,26</div>
<div class="t" style="left:1144.90px;top:931.46px;font-size:16px;color:#f4f4f4;letter-spacing:-0.174px;">1,92</div>
<div class="t" style="left:1211.30px;top:931.46px;font-size:16px;color:#f4f4f4;letter-spacing:-0.174px;">3,25</div>
<div class="t" style="left:1277.70px;top:931.46px;font-size:16px;color:#f4f4f4;letter-spacing:-0.174px;">4,55</div>
<div class="t" style="left:1344.30px;top:931.46px;font-size:16px;color:#f4f4f4;letter-spacing:-0.174px;">4,78</div>
<div class="t" style="left:1410.80px;top:931.46px;font-size:16px;color:#f4f4f4;letter-spacing:-0.174px;">4,13</div>
<div class="t" style="left:1477.40px;top:931.46px;font-size:16px;color:#f4f4f4;letter-spacing:-0.174px;">3,49</div>
<div class="t" style="left:1543.90px;top:931.46px;font-size:16px;color:#f4f4f4;letter-spacing:-0.174px;">3,12</div>
<div class="t" style="left:1610.40px;top:931.46px;font-size:16px;color:#f4f4f4;letter-spacing:-0.174px;">3,18</div>
<div class="t" style="left:1676.80px;top:931.46px;font-size:16px;color:#f4f4f4;letter-spacing:-0.174px;">4,67</div>
<div style="position:absolute;left:201px;top:1048.5px;width:1708px;height:2.5px;background:#5a5a56;"></div>
<div style="position:absolute;left:0px;top:1048.5px;width:201px;height:2.5px;background:#64645f;"></div>
<div style="position:absolute;left:201.7px;top:987.8px;width:124.6px;height:61px;background:linear-gradient(#9c9c9c 0%,#8a8a8a 12%,#6e6e6e 60%,#555 100%);box-shadow:inset 0 1px 0 #a8a8a8, inset 1px 0 0 #8a8a8a, inset -1px 0 0 #5a5a5a;border-radius:4px 4px 0 0;"></div>
<div style="position:absolute;left:207.0px;top:993.3px;width:114.1px;height:35.5px;background:#000000;border-radius:3.5px;box-shadow:0 0 1.5px rgba(0,0,0,.45), inset 0 1px 1px rgba(0,0,0,.25);"></div>
<div class="t" style="left:261.22px;top:1036.04px;font-size:10px;color:#2a2a2a;font-weight:bold;">0</div>
<div style="position:absolute;left:328.6px;top:987.8px;width:124.6px;height:61px;background:linear-gradient(#9c9c9c 0%,#8a8a8a 12%,#6e6e6e 60%,#555 100%);box-shadow:inset 0 1px 0 #a8a8a8, inset 1px 0 0 #8a8a8a, inset -1px 0 0 #5a5a5a;border-radius:4px 4px 0 0;"></div>
<div style="position:absolute;left:333.9px;top:993.3px;width:114.1px;height:35.5px;background:#1a1a1a;border-radius:3.5px;box-shadow:0 0 1.5px rgba(0,0,0,.45), inset 0 1px 1px rgba(0,0,0,.25);"></div>
<div class="t" style="left:385.31px;top:1036.04px;font-size:10px;color:#2a2a2a;font-weight:bold;">10</div>
<div style="position:absolute;left:455.4px;top:987.8px;width:124.6px;height:61px;background:linear-gradient(#9c9c9c 0%,#8a8a8a 12%,#6e6e6e 60%,#555 100%);box-shadow:inset 0 1px 0 #a8a8a8, inset 1px 0 0 #8a8a8a, inset -1px 0 0 #5a5a5a;border-radius:4px 4px 0 0;"></div>
<div style="position:absolute;left:460.7px;top:993.3px;width:114.1px;height:35.5px;background:#333333;border-radius:3.5px;box-shadow:0 0 1.5px rgba(0,0,0,.45), inset 0 1px 1px rgba(0,0,0,.25);"></div>
<div class="t" style="left:512.18px;top:1036.04px;font-size:10px;color:#2a2a2a;font-weight:bold;">20</div>
<div style="position:absolute;left:582.3px;top:987.8px;width:124.6px;height:61px;background:linear-gradient(#9c9c9c 0%,#8a8a8a 12%,#6e6e6e 60%,#555 100%);box-shadow:inset 0 1px 0 #a8a8a8, inset 1px 0 0 #8a8a8a, inset -1px 0 0 #5a5a5a;border-radius:4px 4px 0 0;"></div>
<div style="position:absolute;left:587.6px;top:993.3px;width:114.1px;height:35.5px;background:#4d4d4d;border-radius:3.5px;box-shadow:0 0 1.5px rgba(0,0,0,.45), inset 0 1px 1px rgba(0,0,0,.25);"></div>
<div class="t" style="left:639.05px;top:1036.04px;font-size:10px;color:#2a2a2a;font-weight:bold;">30</div>
<div style="position:absolute;left:709.2px;top:987.8px;width:124.6px;height:61px;background:linear-gradient(#9c9c9c 0%,#8a8a8a 12%,#6e6e6e 60%,#555 100%);box-shadow:inset 0 1px 0 #a8a8a8, inset 1px 0 0 #8a8a8a, inset -1px 0 0 #5a5a5a;border-radius:4px 4px 0 0;"></div>
<div style="position:absolute;left:714.5px;top:993.3px;width:114.1px;height:35.5px;background:#666666;border-radius:3.5px;box-shadow:0 0 1.5px rgba(0,0,0,.45), inset 0 1px 1px rgba(0,0,0,.25);"></div>
<div class="t" style="left:765.92px;top:1036.04px;font-size:10px;color:#2a2a2a;font-weight:bold;">40</div>
<div style="position:absolute;left:836.0px;top:987.8px;width:124.6px;height:61px;background:linear-gradient(#9c9c9c 0%,#8a8a8a 12%,#6e6e6e 60%,#555 100%);box-shadow:inset 0 1px 0 #a8a8a8, inset 1px 0 0 #8a8a8a, inset -1px 0 0 #5a5a5a;border-radius:4px 4px 0 0;"></div>
<div style="position:absolute;left:841.3px;top:993.3px;width:114.1px;height:35.5px;background:#808080;border-radius:3.5px;box-shadow:0 0 1.5px rgba(0,0,0,.45), inset 0 1px 1px rgba(0,0,0,.25);"></div>
<div class="t" style="left:892.79px;top:1036.04px;font-size:10px;color:#2a2a2a;font-weight:bold;">50</div>
<div style="position:absolute;left:962.9px;top:987.8px;width:124.6px;height:61px;background:linear-gradient(#9c9c9c 0%,#8a8a8a 12%,#6e6e6e 60%,#555 100%);box-shadow:inset 0 1px 0 #a8a8a8, inset 1px 0 0 #8a8a8a, inset -1px 0 0 #5a5a5a;border-radius:4px 4px 0 0;"></div>
<div style="position:absolute;left:968.2px;top:993.3px;width:114.1px;height:35.5px;background:#999999;border-radius:3.5px;box-shadow:0 0 1.5px rgba(0,0,0,.45), inset 0 1px 1px rgba(0,0,0,.25);"></div>
<div class="t" style="left:1019.66px;top:1036.04px;font-size:10px;color:#2a2a2a;font-weight:bold;">60</div>
<div style="position:absolute;left:1089.8px;top:987.8px;width:124.6px;height:61px;background:linear-gradient(#9c9c9c 0%,#8a8a8a 12%,#6e6e6e 60%,#555 100%);box-shadow:inset 0 1px 0 #a8a8a8, inset 1px 0 0 #8a8a8a, inset -1px 0 0 #5a5a5a;border-radius:4px 4px 0 0;"></div>
<div style="position:absolute;left:1095.1px;top:993.3px;width:114.1px;height:35.5px;background:#b3b3b3;border-radius:3.5px;box-shadow:0 0 1.5px rgba(0,0,0,.45), inset 0 1px 1px rgba(0,0,0,.25);"></div>
<div class="t" style="left:1146.53px;top:1036.04px;font-size:10px;color:#2a2a2a;font-weight:bold;">70</div>
<div style="position:absolute;left:1216.7px;top:987.8px;width:124.6px;height:61px;background:linear-gradient(#9c9c9c 0%,#8a8a8a 12%,#6e6e6e 60%,#555 100%);box-shadow:inset 0 1px 0 #a8a8a8, inset 1px 0 0 #8a8a8a, inset -1px 0 0 #5a5a5a;border-radius:4px 4px 0 0;"></div>
<div style="position:absolute;left:1222.0px;top:993.3px;width:114.1px;height:35.5px;background:#cccccc;border-radius:3.5px;box-shadow:0 0 1.5px rgba(0,0,0,.45), inset 0 1px 1px rgba(0,0,0,.25);"></div>
<div class="t" style="left:1273.40px;top:1036.04px;font-size:10px;color:#2a2a2a;font-weight:bold;">80</div>
<div style="position:absolute;left:1343.5px;top:987.8px;width:124.6px;height:61px;background:linear-gradient(#9c9c9c 0%,#8a8a8a 12%,#6e6e6e 60%,#555 100%);box-shadow:inset 0 1px 0 #a8a8a8, inset 1px 0 0 #8a8a8a, inset -1px 0 0 #5a5a5a;border-radius:4px 4px 0 0;"></div>
<div style="position:absolute;left:1348.8px;top:993.3px;width:114.1px;height:35.5px;background:#e6e6e6;border-radius:3.5px;box-shadow:0 0 1.5px rgba(0,0,0,.45), inset 0 1px 1px rgba(0,0,0,.25);"></div>
<div class="t" style="left:1400.27px;top:1036.04px;font-size:10px;color:#2a2a2a;font-weight:bold;">90</div>
<div style="position:absolute;left:1470.4px;top:987.8px;width:124.6px;height:61px;background:linear-gradient(#1c1c1c,#2a2a2a);box-shadow:inset 0 0 0 1px #111;border-radius:4px 4px 0 0;"></div>
<div style="position:absolute;left:1475.7px;top:993.3px;width:114.1px;height:35.5px;background:#ffffff;border-radius:3.5px;"></div>
<div class="t" style="left:1524.36px;top:1036.04px;font-size:10px;color:#fff;font-weight:bold;">100</div>
<div style="position:absolute;left:1597.8px;top:988px;width:48.4px;height:18px;background:linear-gradient(#9e9e9e,#7e7e7e);border-radius:4px 4px 0 0;box-shadow:inset 0 -1px 0 #555;"></div>
<div style="position:absolute;left:1597.8px;top:1006.4px;width:48.4px;height:42.4px;background:linear-gradient(#8e8e8e,#666);"></div>
<svg style="left:1597px;top:988px" width="50" height="61" viewBox="0 0 50 61"><defs><linearGradient id="bc" x1="0" y1="0" x2="0" y2="1"><stop offset="0" stop-color="#6a6a6a"/><stop offset="1" stop-color="#9a9a9a"/></linearGradient></defs><ellipse cx="24.8" cy="8.6" rx="7.2" ry="6.6" fill="url(#bc)"/><path d="M20.6 10.6 H29 L24.8 6.4Z" fill="#3a3a3a"/><defs><linearGradient id="sq" x1="0" y1="0" x2="0" y2="1"><stop offset="0" stop-color="#b2b2b2"/><stop offset=".5" stop-color="#a6a6a6"/><stop offset=".52" stop-color="#969696"/><stop offset="1" stop-color="#9a9a9a"/></linearGradient></defs><rect x="10.3" y="25.2" width="29" height="29.4" rx="3.5" fill="url(#sq)" stroke="#262626" stroke-width="2.1"/><rect x="18" y="33.4" width="14.2" height="13.6" fill="#050505"/></svg>
<div style="position:absolute;left:1647.4px;top:988px;width:45.899999999999864px;height:30.4px;background:linear-gradient(#a2a2a2 0%,#8e8e8e 45%,#6c6c6c 100%);box-shadow:inset 1px 0 0 rgba(255,255,255,.12), inset -1px 0 0 #4c4c4c, inset 0 -1px 0 #505050;border-radius:4px 0 0 0;"></div>
<div style="position:absolute;left:1693.3px;top:988px;width:44.90000000000009px;height:30.4px;background:linear-gradient(#a2a2a2 0%,#8e8e8e 45%,#6c6c6c 100%);box-shadow:inset 1px 0 0 rgba(255,255,255,.12), inset -1px 0 0 #4c4c4c, inset 0 -1px 0 #505050;"></div>
<div style="position:absolute;left:1738.2px;top:988px;width:45.200000000000045px;height:30.4px;background:linear-gradient(#a2a2a2 0%,#8e8e8e 45%,#6c6c6c 100%);box-shadow:inset 1px 0 0 rgba(255,255,255,.12), inset -1px 0 0 #4c4c4c, inset 0 -1px 0 #505050;"></div>
<div style="position:absolute;left:1783.4px;top:988px;width:45.0px;height:30.4px;background:linear-gradient(#a2a2a2 0%,#8e8e8e 45%,#6c6c6c 100%);box-shadow:inset 1px 0 0 rgba(255,255,255,.12), inset -1px 0 0 #4c4c4c, inset 0 -1px 0 #505050;"></div>
<div style="position:absolute;left:1828.4px;top:988px;width:44.69999999999982px;height:30.4px;background:linear-gradient(#a2a2a2 0%,#8e8e8e 45%,#6c6c6c 100%);box-shadow:inset 1px 0 0 rgba(255,255,255,.12), inset -1px 0 0 #4c4c4c, inset 0 -1px 0 #505050;"></div>
<div style="position:absolute;left:1873.1px;top:988px;width:44.90000000000009px;height:30.4px;background:linear-gradient(#a2a2a2 0%,#8e8e8e 45%,#6c6c6c 100%);box-shadow:inset 1px 0 0 rgba(255,255,255,.12), inset -1px 0 0 #4c4c4c, inset 0 -1px 0 #505050;"></div>
<div style="position:absolute;left:1647.4px;top:1019px;width:136px;height:29.6px;background:linear-gradient(#a2a2a2 0%,#8e8e8e 45%,#6c6c6c 100%);box-shadow:inset 0 1px 0 #b0b0b0, inset -1px 0 0 #555;border-radius:4px 0 0 0;"></div>
<div style="position:absolute;left:1783.4px;top:1019px;width:130px;height:29.6px;background:linear-gradient(#a2a2a2 0%,#8e8e8e 45%,#6c6c6c 100%);box-shadow:inset 0 1px 0 #b0b0b0, inset 1px 0 0 #a0a0a0;"></div>
<svg style="left:0;top:0" width="1909" height="1051" viewBox="0 0 1909 1051">
<defs><linearGradient id="cb" x1="0" y1="0" x2="0" y2="1"><stop offset="0" stop-color="#6c6c6c"/><stop offset="1" stop-color="#a4a4a4"/></linearGradient></defs>
<circle cx="1670.3" cy="1002.8" r="9.8" fill="url(#cb)"/>
<circle cx="1715.5" cy="1002.8" r="9.8" fill="url(#cb)"/>
<circle cx="1760.8" cy="1002.8" r="9.8" fill="url(#cb)"/>
<circle cx="1806" cy="1002.8" r="9.8" fill="url(#cb)"/>
<circle cx="1850.8" cy="1002.8" r="9.8" fill="url(#cb)"/>
<circle cx="1896.6" cy="1002.8" r="9.8" fill="url(#cb)"/>
<rect x="1666.3" y="998.8" width="8" height="8" fill="#353535"/>
<path d="M1712.5 998.2 V1007.6 L1720.5 1002.9Z" fill="#353535"/>
<path d="M1757.8 998.6 H1755.8 V1007.2 H1757.8 M1763.8 998.6 H1765.8 V1007.2 H1763.8 M1758.8 1002.9 H1762.8" fill="none" stroke="#353535" stroke-width="1.6" stroke-dasharray="none"/>
<path d="M1806 1002.9 C1804 999.8 1800 999.8 1800 1002.9 C1800 1006 1804 1006 1806 1002.9 C1808 999.8 1812 999.8 1812 1002.9 C1812 1006 1808 1006 1806 1002.9Z" fill="none" stroke="#353535" stroke-width="1.7"/>
<path d="M1846.2 1001.6 A4.8 4.8 0 0 1 1854.3999999999999 999.6 M1855.3999999999999 1004.2 A4.8 4.8 0 0 1 1847.2 1006.2" fill="none" stroke="#353535" stroke-width="2.2"/><path d="M1856.2 997.2 V1001.6 H1851.8Z M1845.3999999999999 1008.6 V1004.2 H1849.8Z" fill="#353535"/>
<circle cx="1677.8" cy="1034" r="9.8" fill="url(#cb)"/>
<circle cx="1890.7" cy="1034" r="9.8" fill="url(#cb)"/>
<path d="M1677 1029.8 L1673.6 1034 L1677 1038.2 M1681.4 1029.8 L1678 1034 L1681.4 1038.2" fill="none" stroke="#353535" stroke-width="1.9"/>
<path d="M1887.2 1029.8 L1890.6 1034 L1887.2 1038.2 M1891.6 1029.8 L1895 1034 L1891.6 1038.2" fill="none" stroke="#353535" stroke-width="1.9"/>
</svg>
<div class="t" style="left:1703.40px;top:1025.65px;font-size:20.6px;color:#303030;letter-spacing:0.751px;font-family:'DejaVu Sans',sans-serif;-webkit-text-stroke:0.45px #303030;text-shadow:0 1px 0 rgba(255,255,255,.2);">Back</div>
<div class="t" style="left:1809.30px;top:1025.65px;font-size:20.6px;color:#303030;letter-spacing:1.881px;font-family:'DejaVu Sans',sans-serif;-webkit-text-stroke:0.45px #303030;text-shadow:0 1px 0 rgba(255,255,255,.2);">Next</div>
</div></body></html>
